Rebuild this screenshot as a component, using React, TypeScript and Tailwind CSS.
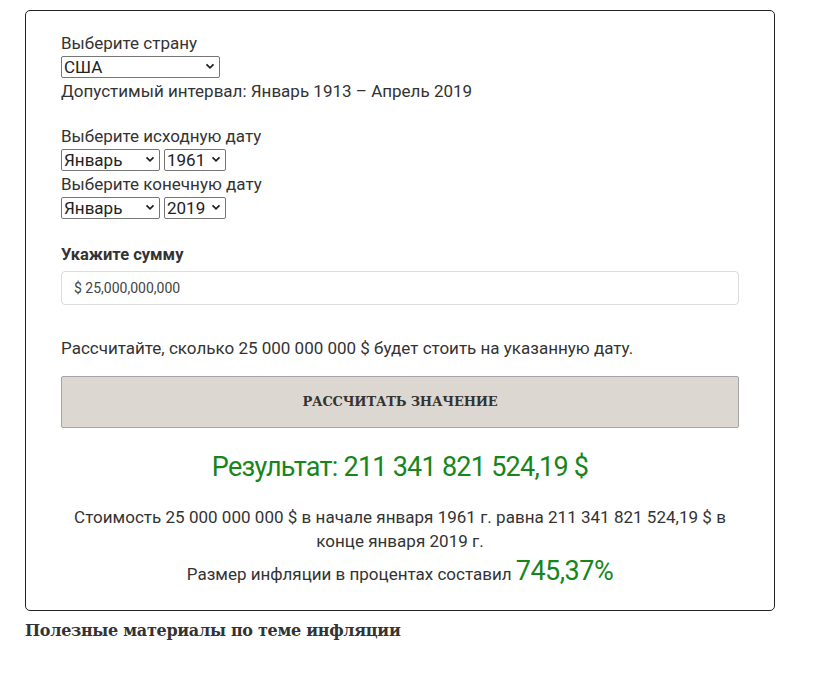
import React from "react";

const selCls =
  "h-[22px] border border-[#767676] rounded-[2px] bg-white text-[17px] leading-[20px] text-[#222] pl-[2px] appearance-none";

function Chevron() {
  return (
    <svg width="10" height="10" viewBox="0 0 10 10" className="absolute right-[5px] top-[6px] pointer-events-none">
      <path d="M1.5 3.3 L5 6.8 L8.5 3.3" fill="none" stroke="#222" strokeWidth="1.8" />
    </svg>
  );
}

function Select({ value, w }: { value: string; w: string }) {
  return (
    <span className={`relative inline-block ${w}`}>
      <select className={`${selCls} w-full`} defaultValue={value}>
        <option>{value}</option>
      </select>
      <Chevron />
    </span>
  );
}

export default function App() {
  return (
    <div className="bg-white w-[814px] h-[684px] pt-[10px] pl-[25px]" style={{ fontFamily: "Roboto, 'Noto Sans', sans-serif" }}>
      <div className="w-[750px] border border-[#222] rounded-[5px] pt-[20px] pb-[21px] px-[35px] text-[#333]">
        <div className="text-[17px] leading-[24px] text-[#333]">
          <div>Выберите страну</div>
          <div className="h-[24px] flex items-center">
            <Select value="США" w="w-[159px]" />
          </div>
          <div>Допустимый интервал: Январь 1913 – Апрель 2019</div>
          <div className="h-[21px]" />
          <div>Выберите исходную дату</div>
          <div className="h-[24px] flex items-center gap-[4px]">
            <Select value="Январь" w="w-[99px]" />
            <Select value="1961" w="w-[62px]" />
          </div>
          <div>Выберите конечную дату</div>
          <div className="h-[24px] flex items-center gap-[4px]">
            <Select value="Январь" w="w-[99px]" />
            <Select value="2019" w="w-[62px]" />
          </div>
        </div>

        <div className="mt-[23px] text-[16.5px] leading-[24px] font-bold text-[#333]">Укажите сумму</div>
        <div className="mt-[4px] h-[34px] border border-[#ddd] rounded-[4px] flex items-center pl-[12px] text-[14px] text-[#444]">
          $ 25,000,000,000
        </div>

        <div className="mt-[31px] text-[17px] leading-[24px] text-[#333]">
          Рассчитайте, сколько 25 000 000 000 $ будет стоить на указанную дату.
        </div>

        <div className="mt-[16px] h-[52px] bg-[#dcd8d1] border border-[#a5a5a5] rounded-[2px] flex items-center justify-center">
          <span
            className="text-[13px] font-bold text-[#333] tracking-[-0.2px]"
            style={{ fontFamily: "'DejaVu Serif', 'Liberation Serif', serif" }}
          >
            РАССЧИТАТЬ ЗНАЧЕНИЕ
          </span>
        </div>

        <div className="mt-[22px] text-center text-[27px] leading-[34px] text-[#17861a] tracking-[-0.75px]">
          Результат: 211 341 821 524,19 $
        </div>

        <div className="mt-[21px] text-center text-[17px] leading-[24px] text-[#333] tracking-[0.02px]">
          Стоимость 25 000 000 000 $ в начале января 1961 г. равна 211 341 821 524,19 $ в конце января 2019 г.
        </div>
        <div className="mt-[3px] text-center text-[17px] leading-[30px] text-[#333]">
          Размер инфляции в процентах составил{" "}
          <span className="text-[27px] text-[#17861a] tracking-[-0.5px]">745,37%</span>
        </div>
      </div>
      <div
        className="mt-[8px] text-[16px] font-bold text-[#333] tracking-[-0.3px]"
        style={{ fontFamily: "'DejaVu Serif', 'Liberation Serif', serif" }}
      >
        Полезные материалы по теме инфляции
      </div>
    </div>
  );
}
